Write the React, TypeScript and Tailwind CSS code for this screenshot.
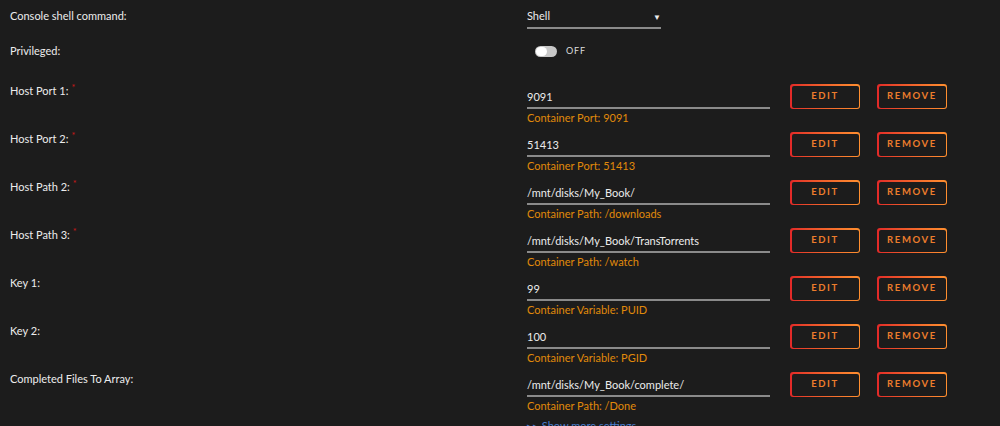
import React from "react";

type Row = {
  label: string;
  required?: boolean;
  value: string;
  hint: string;
};

const rows: Row[] = [
  { label: "Host Port 1:", required: true, value: "9091", hint: "Container Port: 9091" },
  { label: "Host Port 2:", required: true, value: "51413", hint: "Container Port: 51413" },
  { label: "Host Path 2:", required: true, value: "/mnt/disks/My_Book/", hint: "Container Path: /downloads" },
  { label: "Host Path 3:", required: true, value: "/mnt/disks/My_Book/TransTorrents", hint: "Container Path: /watch" },
  { label: "Key 1:", value: "99", hint: "Container Variable: PUID" },
  { label: "Key 2:", value: "100", hint: "Container Variable: PGID" },
  { label: "Completed Files To Array:", value: "/mnt/disks/My_Book/complete/", hint: "Container Path: /Done" },
];

function GradButton({ children }: { children: React.ReactNode }) {
  return (
    <button
      type="button"
      className="h-[25px] w-[70px] rounded-[3px] bg-gradient-to-r from-[#e22828] to-[#ff8f2f] p-[1.5px]"
    >
      <span className="flex h-full w-full items-center justify-center rounded-[2px] bg-[#1c1c1c]">
        <span className="text-[9.5px] font-bold tracking-[0.17em] text-[#ec7d2c]">{children}</span>
      </span>
    </button>
  );
}

export default function App() {
  return (
    <div
      className="h-[426px] w-[1000px] overflow-hidden bg-[#1c1c1c] pl-[10px] text-[11px] text-[#ececec]"
      style={{ fontFamily: '"Lato", "Noto Sans", sans-serif' }}
    >
      <div className="flex h-[32px] items-center">
        <div className="w-[517px]">Console shell command:</div>
        <div className="mt-[3px] flex h-[23px] w-[134px] items-center justify-between border-b-2 border-[#8a8a8a]">
          <span>Shell</span>
          <span className="text-[8px]">▼</span>
        </div>
      </div>
      <div className="flex h-[38px] items-center">
        <div className="w-[517px]">Privileged:</div>
        <div className="flex items-center gap-[9px] pl-[8px]">
          <div className="flex h-[11px] w-[22px] items-center rounded-full bg-[#c8c8c8] p-[1px]">
            <div className="h-[9px] w-[11px] rounded-full bg-white" />
          </div>
          <span className="text-[9px] tracking-[0.1em] text-[#dcdcdc]">OFF</span>
        </div>
      </div>
      <div className="flex flex-col">
        {rows.map((r) => (
          <div key={r.label} className="flex h-[48px] pt-[14px]">
            <div className="w-[517px] leading-[14px]">
              {r.label}
              {r.required && <sup className="ml-[3px] text-[9px] text-[#d01818]">*</sup>}
            </div>
            <div className="w-[243px]">
              <div className="flex h-[25px] items-center border-b-2 border-[#8a8a8a] pt-[3px]">{r.value}</div>
              <div className="pt-[1px] leading-[16px] text-[#e08a0a]">{r.hint}</div>
            </div>
            <div className="ml-[20px] flex gap-[17px]">
              <GradButton>EDIT</GradButton>
              <GradButton>REMOVE</GradButton>
            </div>
          </div>
        ))}
      </div>
      <div className="pl-[517px] pt-[12px] text-[11px] text-[#4a7ccc]">▸▸ Show more settings ...</div>
    </div>
  );
}
